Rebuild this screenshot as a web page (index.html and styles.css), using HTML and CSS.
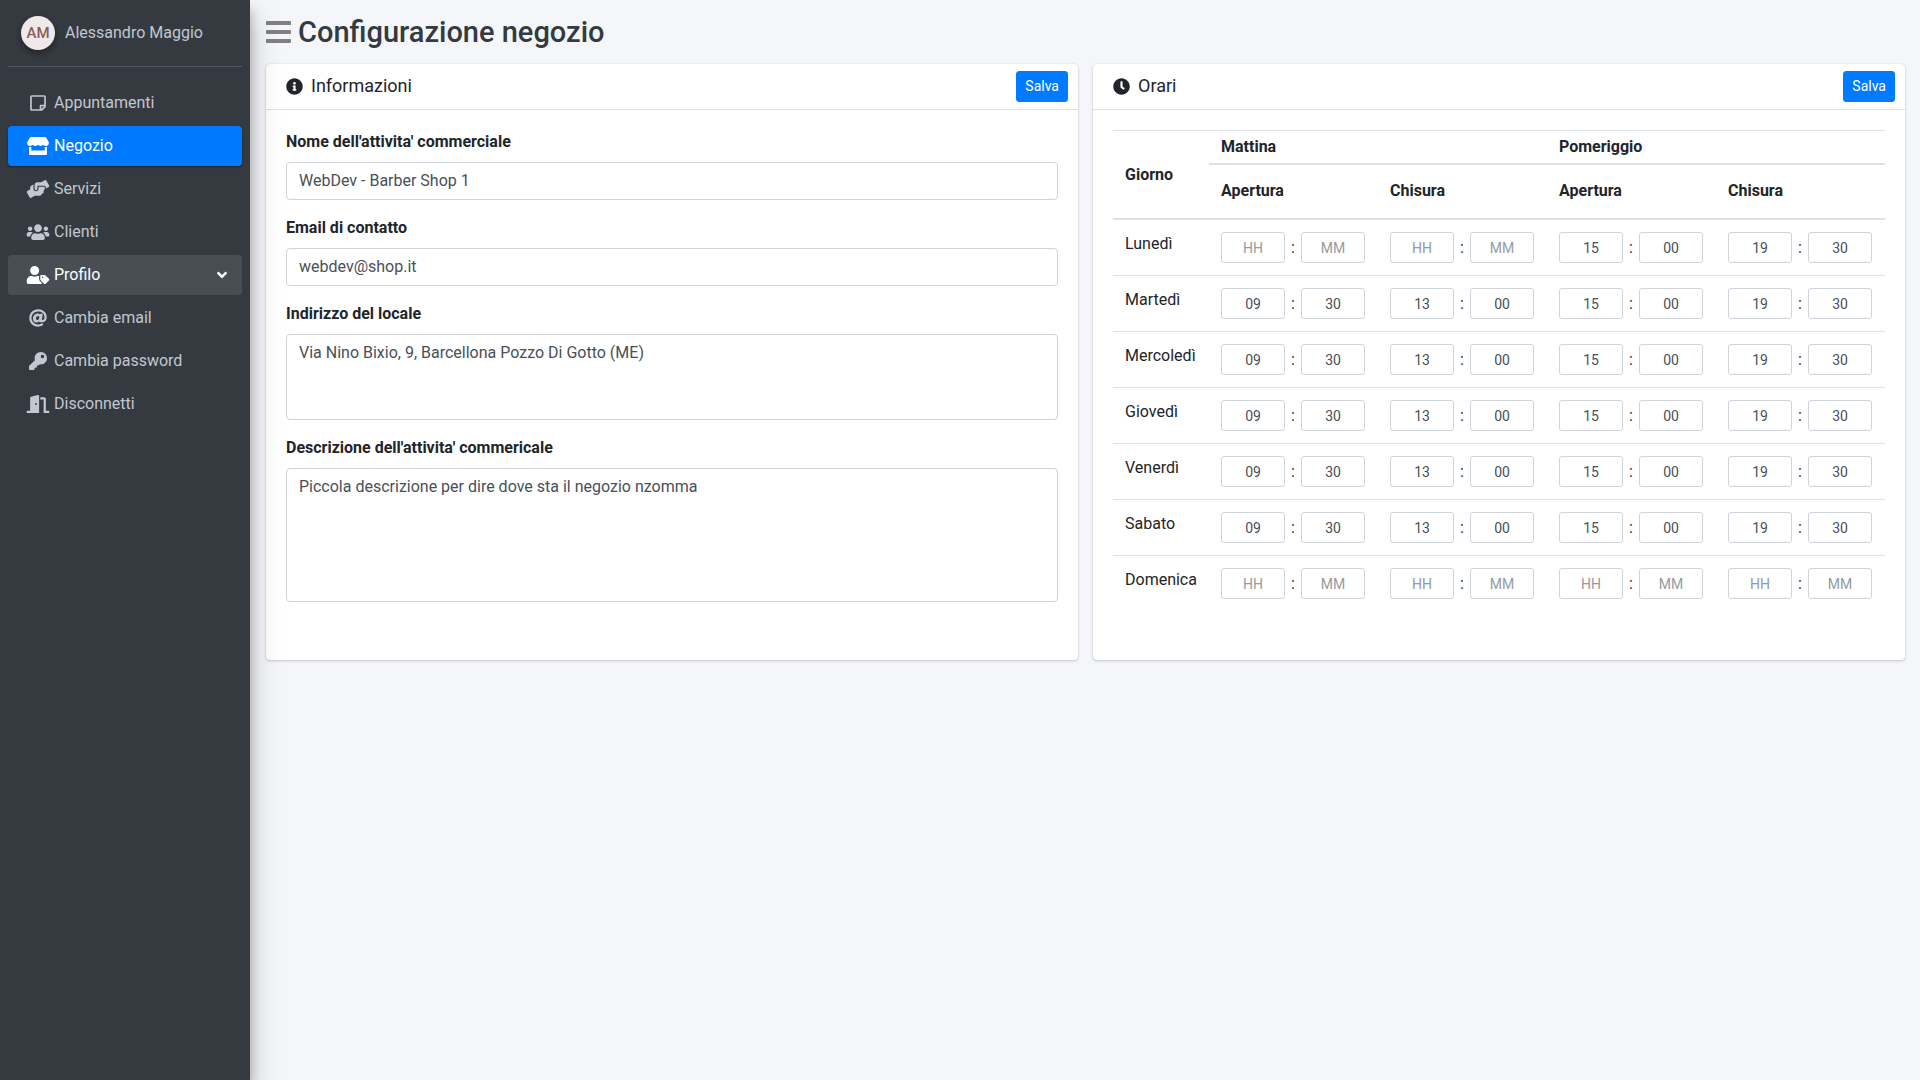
FILE: index.html
```html
<!DOCTYPE html>
<html lang="it">
<head>
<meta charset="utf-8">
<meta name="viewport" content="width=device-width, initial-scale=1">
<title>Configurazione negozio</title>
<link rel="stylesheet" href="styles.css">
</head>
<body>
<div class="layout">
  <aside class="sidebar">
    <div class="user-panel">
      <span class="avatar">AM</span>
      <a class="user-name" href="#">Alessandro Maggio</a>
    </div>
    <nav class="menu" aria-label="Menu principale">
      <a class="menu-link" href="#"><svg class="menu-icon" viewBox="0 0 448 512" aria-hidden="true"><path d="M448 348.106V80c0-26.51-21.49-48-48-48H48C21.49 32 0 53.49 0 80v351.988c0 26.51 21.49 48 48 48h268.118a48 48 0 0 0 33.941-14.059l83.882-83.882A48 48 0 0 0 448 348.106zm-128 80.005v-76.118h76.118L320 428.111zM400 80v223.988H296c-13.255 0-24 10.745-24 24v104H48V80h352z"/></svg><span>Appuntamenti</span></a>
      <a class="menu-link active" href="#" aria-current="page"><svg class="menu-icon" viewBox="0 0 616 512" aria-hidden="true"><path d="M602 118.6L537.1 15C531.3 5.7 521 0 510 0H106C95 0 84.7 5.7 78.9 15L14 118.6c-33.5 53.5-3.8 127.9 58.8 136.4 4.5.6 9.1.9 13.7.9 29.6 0 55.8-13 73.8-33.1 18 20.1 44.3 33.1 73.8 33.1 29.6 0 55.8-13 73.8-33.1 18 20.1 44.3 33.1 73.8 33.1 29.6 0 55.8-13 73.8-33.1 18.1 20.1 44.3 33.1 73.8 33.1 4.7 0 9.2-.3 13.7-.9 62.8-8.4 92.6-82.8 59-136.4zM529.5 288c-10 0-19.9-1.5-29.5-3.8V384H116v-99.8c-9.6 2.2-19.5 3.8-29.5 3.8-6 0-12.1-.4-18-1.2-5.6-.8-11.1-2.1-16.4-3.6V480c0 17.7 14.3 32 32 32h448c17.7 0 32-14.3 32-32V283.2c-5.4 1.6-10.8 2.9-16.4 3.6-6.1.8-12.1 1.2-18.2 1.2z"/></svg><span>Negozio</span></a>
      <a class="menu-link" href="#"><svg class="menu-icon" viewBox="0 0 640 512" aria-hidden="true"><path d="M488 192H336v56c0 39.7-32.3 72-72 72s-72-32.3-72-72V126.4l-64.9 39C107.8 176.9 96 197.8 96 220.2v47.3l-80 46.2C.7 322.5-4.6 342.1 4.3 357.4l80 138.6c8.8 15.3 28.4 20.5 43.7 11.7L231.4 448H368c35.3 0 64-28.7 64-64h16c17.7 0 32-14.3 32-32v-64h8c13.3 0 24-10.7 24-24v-48c0-13.3-10.7-24-24-24zm147.7-37.4L555.7 16C546.9.7 527.3-4.5 512 4.3L408.6 64H306.4c-12 0-23.7 3.4-33.9 9.7L239 94.6c-9.4 5.8-15 16.1-15 27.1V248c0 22.1 17.9 40 40 40s40-17.9 40-40v-88h184c30.9 0 56 25.1 56 56v28.5l80-46.2c15.3-8.9 20.5-28.4 11.7-43.7z"/></svg><span>Servizi</span></a>
      <a class="menu-link" href="#"><svg class="menu-icon" viewBox="0 0 640 512" aria-hidden="true"><path d="M96 224c35.3 0 64-28.7 64-64s-28.7-64-64-64-64 28.7-64 64 28.7 64 64 64zm448 0c35.3 0 64-28.7 64-64s-28.7-64-64-64-64 28.7-64 64 28.7 64 64 64zm32 32h-64c-17.6 0-33.5 7.1-45.1 18.6 40.3 22.1 68.9 62 75.1 109.4h66c17.7 0 32-14.3 32-32v-32c0-35.3-28.7-64-64-64zm-256 0c61.9 0 112-50.1 112-112S381.9 32 320 32 208 82.1 208 144s50.1 112 112 112zm76.8 32h-8.3c-20.8 10-43.9 16-68.5 16s-47.6-6-68.5-16h-8.3C179.6 288 128 339.6 128 403.2V432c0 26.5 21.5 48 48 48h288c26.5 0 48-21.5 48-48v-28.8c0-63.6-51.6-115.2-115.2-115.2zm-223.7-13.4C161.5 263.1 145.6 256 128 256H64c-35.3 0-64 28.7-64 64v32c0 17.7 14.3 32 32 32h65.9c6.3-47.4 34.9-87.3 75.2-109.4z"/></svg><span>Clienti</span></a>
      <a class="menu-link open" href="#" aria-expanded="true"><svg class="menu-icon" viewBox="0 0 640 512" aria-hidden="true"><path d="M630.6 364.9l-90.3-90.2c-12-12-28.3-18.7-45.3-18.7h-79.3c-17.7 0-32 14.3-32 32v79.2c0 17 6.7 33.2 18.7 45.2l90.3 90.2c12.5 12.5 32.8 12.5 45.3 0l92.5-92.5c12.6-12.5 12.6-32.7.1-45.2zm-182.8-21c-13.3 0-24-10.7-24-24s10.7-24 24-24 24 10.7 24 24c0 13.2-10.7 24-24 24zm-223.8-88c70.7 0 128-57.3 128-128C352 57.3 294.7 0 224 0S96 57.3 96 128c0 70.6 57.3 127.9 128 127.9zm127.8 111.2V294c-12.2-3.6-24.9-6.2-38.2-6.2h-16.7c-22.2 10.2-46.9 16-72.9 16s-50.6-5.8-72.9-16h-16.7C60.2 287.9 0 348.1 0 422.3v41.6c0 26.5 21.5 48 48 48h352c15.5 0 29.1-7.5 37.9-18.9l-58-58c-18.1-18.1-28.1-42.2-28.1-67.9z"/></svg><span>Profilo</span><svg class="menu-arrow" viewBox="0 0 320 512" aria-hidden="true"><path d="M143 352.3L7 216.3c-9.4-9.4-9.4-24.6 0-33.9l22.6-22.6c9.4-9.4 24.6-9.4 33.9 0l96.4 96.4 96.4-96.4c9.4-9.4 24.6-9.4 33.9 0l22.6 22.6c9.4 9.4 9.4 24.6 0 33.9l-136 136c-9.2 9.4-24.4 9.4-33.8 0z"/></svg></a>
      <a class="menu-link" href="#"><svg class="menu-icon" viewBox="0 0 512 512" aria-hidden="true"><path d="M256 8C118.941 8 8 118.919 8 256c0 137.059 110.919 248 248 248 48.154 0 95.342-14.14 135.408-40.223 12.005-7.815 14.625-24.288 5.552-35.372l-10.177-12.433c-7.671-9.371-21.179-11.667-31.373-5.129C325.92 429.757 291.314 440 256 440c-101.458 0-184-82.542-184-184S154.542 72 256 72c100.139 0 184 57.619 184 160 0 38.786-21.093 79.742-58.17 83.693-17.349-.454-16.91-12.857-13.476-30.024l23.433-121.11C394.653 149.75 383.308 136 368.225 136h-44.981a13.518 13.518 0 0 0-13.432 11.993l-.01.092c-14.697-17.901-40.448-21.775-59.971-21.775-74.58 0-137.831 62.234-137.831 151.46 0 65.303 36.785 105.87 96 105.87 26.984 0 57.369-15.637 74.991-38.333 9.522 34.104 40.613 34.104 70.71 34.104C462.609 379.41 504 307.798 504 232 504 95.653 394.023 8 256 8zm-21.68 304.43c-22.249 0-36.07-15.623-36.07-40.771 0-44.993 30.779-72.729 58.63-72.729 22.292 0 35.601 15.241 35.601 40.77 0 45.061-33.875 72.73-58.161 72.73z"/></svg><span>Cambia email</span></a>
      <a class="menu-link" href="#"><svg class="menu-icon" viewBox="0 0 512 512" aria-hidden="true"><path d="M512 176.001C512 273.203 433.202 352 336 352c-11.22 0-22.19-1.062-32.827-3.069l-24.012 27.014A23.999 23.999 0 0 1 261.223 384H224v40c0 13.255-10.745 24-24 24h-40v40c0 13.255-10.745 24-24 24H24c-13.255 0-24-10.745-24-24v-78.059c0-6.365 2.529-12.47 7.029-16.971l161.802-161.802C163.108 213.814 160 195.271 160 176 160 78.798 238.797.001 335.999 0 433.488-.001 512 78.511 512 176.001zM336 128c0 26.51 21.49 48 48 48s48-21.49 48-48-21.49-48-48-48-48 21.49-48 48z"/></svg><span>Cambia password</span></a>
      <a class="menu-link" href="#"><svg class="menu-icon" viewBox="0 0 640 512" aria-hidden="true"><path d="M624 448h-80V113.45C544 86.19 522.47 64 496 64H384v64h96v384h144c8.84 0 16-7.16 16-16v-32c0-8.84-7.16-16-16-16zM312.24 1.01l-192 49.74C105.99 54.44 96 67.7 96 82.92V448H16c-8.84 0-16 7.16-16 16v32c0 8.84 7.16 16 16 16h336V33.18c0-21.58-19.56-37.41-39.76-32.17zM264 288c-13.25 0-24-14.33-24-32s10.75-32 24-32 24 14.33 24 32-10.75 32-24 32z"/></svg><span>Disconnetti</span></a>
    </nav>
  </aside>

  <main class="content">
    <header class="page-header">
      <button class="menu-toggle" type="button" aria-label="Apri o chiudi il menu"><svg viewBox="0 0 448 512" aria-hidden="true"><path d="M16 132h416c8.837 0 16-7.163 16-16V76c0-8.837-7.163-16-16-16H16C7.163 60 0 67.163 0 76v40c0 8.837 7.163 16 16 16zm0 160h416c8.837 0 16-7.163 16-16v-40c0-8.837-7.163-16-16-16H16c-8.837 0-16 7.163-16 16v40c0 8.837 7.163 16 16 16zm0 160h416c8.837 0 16-7.163 16-16v-40c0-8.837-7.163-16-16-16H16c-8.837 0-16 7.163-16 16v40c0 8.837 7.163 16 16 16z"/></svg></button>
      <h1 class="page-title">Configurazione negozio</h1>
    </header>

    <div class="cards">
      <form class="card">
        <div class="card-header">
          <svg class="card-icon" viewBox="0 0 512 512" aria-hidden="true"><path d="M256 8C119.043 8 8 119.083 8 256c0 136.997 111.043 248 248 248s248-111.003 248-248C504 119.083 392.957 8 256 8zm0 110c23.196 0 42 18.804 42 42s-18.804 42-42 42-42-18.804-42-42 18.804-42 42-42zm56 254c0 6.627-5.373 12-12 12h-88c-6.627 0-12-5.373-12-12v-24c0-6.627 5.373-12 12-12h12v-64h-12c-6.627 0-12-5.373-12-12v-24c0-6.627 5.373-12 12-12h64c6.627 0 12 5.373 12 12v100h12c6.627 0 12 5.373 12 12v24z"/></svg>
          <h2 class="card-title">Informazioni</h2>
          <button class="save" type="button">Salva</button>
        </div>
        <div class="card-body fields">
          <div class="field">
            <label for="nome">Nome dell'attivita' commerciale</label>
            <input class="control" id="nome" type="text" value="WebDev - Barber Shop 1">
          </div>
          <div class="field">
            <label for="email">Email di contatto</label>
            <input class="control" id="email" type="email" value="webdev@shop.it">
          </div>
          <div class="field">
            <label for="indirizzo">Indirizzo del locale</label>
            <textarea class="control" id="indirizzo" rows="3">Via Nino Bixio, 9, Barcellona Pozzo Di Gotto (ME)</textarea>
          </div>
          <div class="field">
            <label for="descrizione">Descrizione dell'attivita' commericale</label>
            <textarea class="control" id="descrizione" rows="5">Piccola descrizione per dire dove sta il negozio nzomma</textarea>
          </div>
        </div>
      </form>

      <form class="card">
        <div class="card-header">
          <svg class="card-icon" viewBox="0 0 512 512" aria-hidden="true"><path d="M256,8C119,8,8,119,8,256S119,504,256,504,504,393,504,256,393,8,256,8Zm92.49,313h0l-20,25a16,16,0,0,1-22.49,2.5h0l-67-49.72a40,40,0,0,1-15-31.23V112a16,16,0,0,1,16-16h32a16,16,0,0,1,16,16V256l58,42.5A16,16,0,0,1,348.49,321Z"/></svg>
          <h2 class="card-title">Orari</h2>
          <button class="save" type="button">Salva</button>
        </div>
        <div class="card-body">
          <table class="hours">
            <colgroup><col class="col-day"><col><col><col><col></colgroup>
            <thead>
              <tr class="periods"><th class="day-head" rowspan="2" scope="col">Giorno</th><th colspan="2" scope="colgroup">Mattina</th><th colspan="2" scope="colgroup">Pomeriggio</th></tr>
              <tr class="bounds"><th scope="col">Apertura</th><th scope="col">Chisura</th><th scope="col">Apertura</th><th scope="col">Chisura</th></tr>
            </thead>
            <tbody id="hours-body"></tbody>
          </table>
        </div>
      </form>
    </div>
  </main>
</div>
<script src="hours.js"></script>
</body>
</html>
```
FILE: hours.js
```js
// Opening hours: morning open/close, afternoon open/close. An empty string is a closed slot.
const fullDay = ["09:30", "13:00", "15:00", "19:30"];
const week = [
  ["Lunedì", ["", "", "15:00", "19:30"]],
  ["Martedì", fullDay],
  ["Mercoledì", fullDay],
  ["Giovedì", fullDay],
  ["Venerdì", fullDay],
  ["Sabato", fullDay],
  ["Domenica", ["", "", "", ""]]
];
const slots = ["apertura mattina", "chiusura mattina", "apertura pomeriggio", "chiusura pomeriggio"];

function timeInput(value, placeholder, label) {
  return `<input class="time" type="text" inputmode="numeric" maxlength="2" value="${value}" placeholder="${placeholder}" aria-label="${label}">`;
}

document.getElementById("hours-body").innerHTML = week.map(([day, times]) => {
  const cells = times.map((time, i) => {
    const [h = "", m = ""] = time.split(":");
    return `<td><div class="slot">${timeInput(h, "HH", `${day}, ${slots[i]}, ore`)}<span>:</span>${timeInput(m, "MM", `${day}, ${slots[i]}, minuti`)}</div></td>`;
  }).join("");
  return `<tr><th scope="row">${day}</th>${cells}</tr>`;
}).join("");
```
FILE: styles.css
```css
*, *::before, *::after { box-sizing: border-box; }

body {
  margin: 0;
  background: #f4f6f9;
  color: #212529;
  font: 16px/24px Roboto, "Liberation Sans", sans-serif;
}

svg { display: block; fill: currentColor; }
a { color: inherit; text-decoration: none; }
h1, h2 { margin: 0; }
button, input, textarea { font-family: inherit; }

.layout { display: flex; min-height: 100vh; }

/* Sidebar */
.sidebar {
  position: relative;
  z-index: 1;
  flex: 0 0 250px;
  padding: 0 8px;
  background: #343a40;
  color: #c2c7d0;
  box-shadow: 0 14px 28px rgba(0, 0, 0, .25), 0 10px 10px rgba(0, 0, 0, .22);
}
.user-panel {
  display: flex;
  align-items: center;
  gap: 10px;
  margin: 16px 0;
  padding: 0 0 16px 13px;
  border-bottom: 1px solid #4f5962;
}
.avatar {
  width: 34px;
  height: 34px;
  border-radius: 50%;
  background: #f0e9e9;
  color: #8b5d5d;
  font-size: 15px;
  font-weight: 500;
  line-height: 34px;
  text-align: center;
  box-shadow: 0 3px 6px rgba(0, 0, 0, .16), 0 3px 6px rgba(0, 0, 0, .23);
}
.menu { display: flex; flex-direction: column; gap: 3px; }
.menu-link {
  display: flex;
  align-items: center;
  gap: 3px;
  padding: 8px 15px 8px 17px;
  border-radius: 4px;
}
.menu-link.active {
  background: #007bff;
  color: #fff;
  box-shadow: 0 1px 3px rgba(0, 0, 0, .12), 0 1px 2px rgba(0, 0, 0, .24);
}
.menu-link.open { background: rgba(255, 255, 255, .1); color: #fff; }
.menu-icon { width: 26px; height: 18px; }
.menu-arrow { width: 10px; height: 16px; margin-left: auto; }

/* Page */
.content { flex: 1; min-width: 0; padding: 12px 15px 16px 16px; }
.page-header { display: flex; align-items: center; gap: 7px; height: 40px; margin-bottom: 12px; }
.menu-toggle { padding: 0; border: 0; background: none; color: #808080; }
.menu-toggle svg { width: 25px; height: 30px; }
.page-title { color: #343a40; font-size: 29px; font-weight: 500; line-height: 40px; }

.cards { display: grid; grid-template-columns: repeat(auto-fit, minmax(min(100%, 700px), 1fr)); gap: 15px; }
.card {
  background: #fff;
  border-radius: 4px;
  box-shadow: 0 0 1px rgba(0, 0, 0, .13), 0 1px 3px rgba(0, 0, 0, .2);
}
.card-header {
  display: flex;
  align-items: flex-start;
  gap: 8px;
  padding: 7px 10px 7px 20px;
  border-bottom: 1px solid #dfdfdf;
}
.card-icon { width: 17px; height: 31px; }
.card-title { font-size: 18px; font-weight: 400; line-height: 30px; }
.save {
  margin-left: auto;
  padding: 4px 8px;
  border: 1px solid #007bff;
  border-radius: 3px;
  background: #007bff;
  color: #fff;
  font-size: 14px;
  line-height: 21px;
}
.card-body { padding: 20px 20px 49px; }

/* Shop details */
.fields { display: flex; flex-direction: column; gap: 16px; }
.field { display: flex; flex-direction: column; gap: 8px; }
.field label { font-weight: 700; }
.control {
  width: 100%;
  padding: 6px 12px;
  border: 1px solid #ced4da;
  border-radius: 4px;
  background: #fff;
  color: #495057;
  font-size: 16px;
  line-height: 24px;
  resize: none;
}

/* Opening hours */
.hours { width: 100%; table-layout: fixed; border-collapse: separate; border-spacing: 0; }
.col-day { width: 96px; }
.hours th, .hours td { padding: 12px; text-align: left; vertical-align: top; }
.hours thead th { border-bottom: 2px solid #dee2e6; }
.hours .periods th { padding: 4px 12px; border-top: 1px solid #dee2e6; }
.hours .periods .day-head { vertical-align: middle; }
.hours .bounds th { padding: 14px 12px 15px; }
.hours tbody th { font-weight: 400; }
.hours tbody tr:not(:last-child) > * { border-bottom: 1px solid #dee2e6; }
.slot { display: grid; grid-template-columns: 64px 16px 64px; align-items: center; text-align: center; }
.time {
  width: 100%;
  height: 31px;
  padding: 4px 8px;
  border: 1px solid #ced4da;
  border-radius: 3px;
  background: #fff;
  color: #495057;
  font-size: 14px;
  line-height: 21px;
  text-align: center;
}
.time::placeholder { color: #939ba2; opacity: 1; }
```
